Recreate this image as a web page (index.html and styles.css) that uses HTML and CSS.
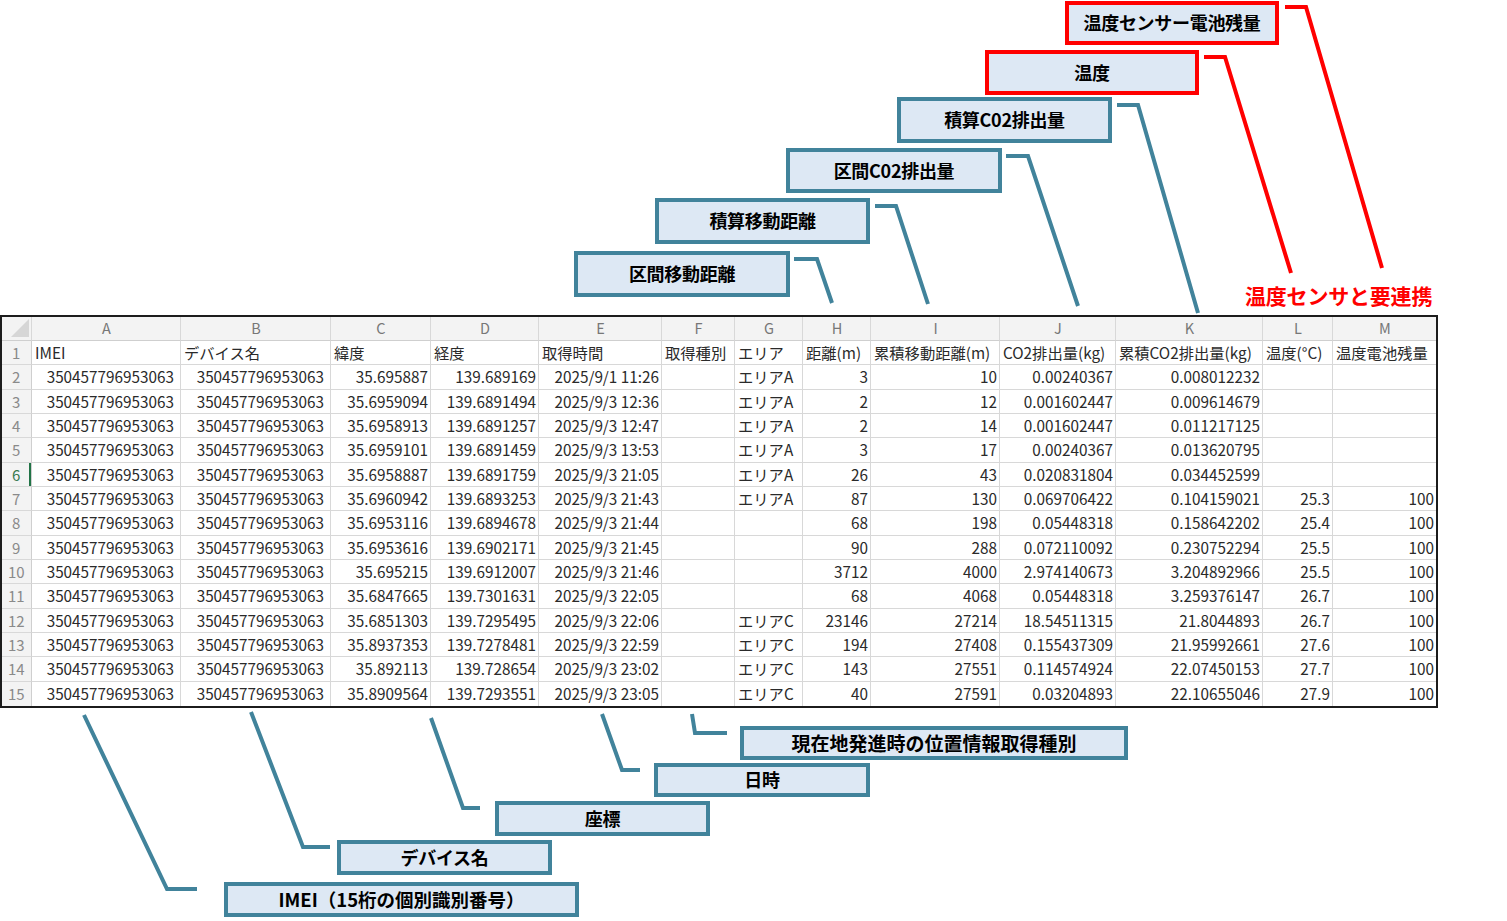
FILE: index.html
```html
<!DOCTYPE html>
<html lang="ja">
<head>
<meta charset="utf-8">
<title>データ項目説明</title>
<link rel="stylesheet" href="styles.css">
</head>
<body>
<div class="canvas">
  <div class="sheet">
    <table class="grid">
      <colgroup>
        <col style="width:30px"><col style="width:149px"><col style="width:150px"><col style="width:100px"><col style="width:108px"><col style="width:123px"><col style="width:73px"><col style="width:68px"><col style="width:68px"><col style="width:129px"><col style="width:116px"><col style="width:147px"><col style="width:70px"><col style="width:103px">
      </colgroup>
      <thead>
        <tr class="colhead">
          <th class="corner"><span class="tri"></span></th>
          <th>A</th><th>B</th><th>C</th><th>D</th><th>E</th><th>F</th><th>G</th><th>H</th><th>I</th><th>J</th><th>K</th><th>L</th><th>M</th>
        </tr>
      </thead>
      <tbody>
        <tr><th>1</th><td class="l">IMEI</td><td class="l">デバイス名</td><td class="l">緯度</td><td class="l">経度</td><td class="l">取得時間</td><td class="l">取得種別</td><td class="l">エリア</td><td class="l">距離(m)</td><td class="l">累積移動距離(m)</td><td class="l">CO2排出量(kg)</td><td class="l">累積CO2排出量(kg)</td><td class="l">温度(°C)</td><td class="l">温度電池残量</td></tr>
        <tr><th>2</th><td>350457796953063</td><td>350457796953063</td><td>35.695887</td><td>139.689169</td><td>2025/9/1 11:26</td><td></td><td class="l">エリアA</td><td>3</td><td>10</td><td>0.00240367</td><td>0.008012232</td><td></td><td></td></tr>
        <tr><th>3</th><td>350457796953063</td><td>350457796953063</td><td>35.6959094</td><td>139.6891494</td><td>2025/9/3 12:36</td><td></td><td class="l">エリアA</td><td>2</td><td>12</td><td>0.001602447</td><td>0.009614679</td><td></td><td></td></tr>
        <tr><th>4</th><td>350457796953063</td><td>350457796953063</td><td>35.6958913</td><td>139.6891257</td><td>2025/9/3 12:47</td><td></td><td class="l">エリアA</td><td>2</td><td>14</td><td>0.001602447</td><td>0.011217125</td><td></td><td></td></tr>
        <tr><th>5</th><td>350457796953063</td><td>350457796953063</td><td>35.6959101</td><td>139.6891459</td><td>2025/9/3 13:53</td><td></td><td class="l">エリアA</td><td>3</td><td>17</td><td>0.00240367</td><td>0.013620795</td><td></td><td></td></tr>
        <tr><th class="sel">6</th><td>350457796953063</td><td>350457796953063</td><td>35.6958887</td><td>139.6891759</td><td>2025/9/3 21:05</td><td></td><td class="l">エリアA</td><td>26</td><td>43</td><td>0.020831804</td><td>0.034452599</td><td></td><td></td></tr>
        <tr><th>7</th><td>350457796953063</td><td>350457796953063</td><td>35.6960942</td><td>139.6893253</td><td>2025/9/3 21:43</td><td></td><td class="l">エリアA</td><td>87</td><td>130</td><td>0.069706422</td><td>0.104159021</td><td>25.3</td><td>100</td></tr>
        <tr><th>8</th><td>350457796953063</td><td>350457796953063</td><td>35.6953116</td><td>139.6894678</td><td>2025/9/3 21:44</td><td></td><td></td><td>68</td><td>198</td><td>0.05448318</td><td>0.158642202</td><td>25.4</td><td>100</td></tr>
        <tr><th>9</th><td>350457796953063</td><td>350457796953063</td><td>35.6953616</td><td>139.6902171</td><td>2025/9/3 21:45</td><td></td><td></td><td>90</td><td>288</td><td>0.072110092</td><td>0.230752294</td><td>25.5</td><td>100</td></tr>
        <tr><th>10</th><td>350457796953063</td><td>350457796953063</td><td>35.695215</td><td>139.6912007</td><td>2025/9/3 21:46</td><td></td><td></td><td>3712</td><td>4000</td><td>2.974140673</td><td>3.204892966</td><td>25.5</td><td>100</td></tr>
        <tr><th>11</th><td>350457796953063</td><td>350457796953063</td><td>35.6847665</td><td>139.7301631</td><td>2025/9/3 22:05</td><td></td><td></td><td>68</td><td>4068</td><td>0.05448318</td><td>3.259376147</td><td>26.7</td><td>100</td></tr>
        <tr><th>12</th><td>350457796953063</td><td>350457796953063</td><td>35.6851303</td><td>139.7295495</td><td>2025/9/3 22:06</td><td></td><td class="l">エリアC</td><td>23146</td><td>27214</td><td>18.54511315</td><td>21.8044893</td><td>26.7</td><td>100</td></tr>
        <tr><th>13</th><td>350457796953063</td><td>350457796953063</td><td>35.8937353</td><td>139.7278481</td><td>2025/9/3 22:59</td><td></td><td class="l">エリアC</td><td>194</td><td>27408</td><td>0.155437309</td><td>21.95992661</td><td>27.6</td><td>100</td></tr>
        <tr><th>14</th><td>350457796953063</td><td>350457796953063</td><td>35.892113</td><td>139.728654</td><td>2025/9/3 23:02</td><td></td><td class="l">エリアC</td><td>143</td><td>27551</td><td>0.114574924</td><td>22.07450153</td><td>27.7</td><td>100</td></tr>
        <tr><th>15</th><td>350457796953063</td><td>350457796953063</td><td>35.8909564</td><td>139.7293551</td><td>2025/9/3 23:05</td><td></td><td class="l">エリアC</td><td>40</td><td>27591</td><td>0.03204893</td><td>22.10655046</td><td>27.9</td><td>100</td></tr>
      </tbody>
    </table>
  </div>

  <svg class="lines" width="1507" height="921" viewBox="0 0 1507 921">
    <g fill="none" stroke="#41839b" stroke-width="4" stroke-linejoin="miter">
      <polyline points="794,259 817,259 832,303"/>
      <polyline points="875,206 896,206 928,304"/>
      <polyline points="1006,156 1028,156 1078,306"/>
      <polyline points="1117,105 1138,105 1198,313"/>
      <polyline points="84,715 167,889 197,889"/>
      <polyline points="251,712 303,847 330,847"/>
      <polyline points="431,718 463,808 480,808"/>
      <polyline points="602,714 622,770 640,770"/>
      <polyline points="692,714 695,733 727,733"/>
    </g>
    <g fill="none" stroke="#ff0000" stroke-width="4" stroke-linejoin="miter">
      <polyline points="1204,57 1225,57 1291,273"/>
      <polyline points="1285,7 1306,7 1382,268"/>
    </g>
  </svg>

  <div class="call red c-batt">温度センサー電池残量</div>
  <div class="call red c-temp">温度</div>
  <div class="call c-co2sum">積算C02排出量</div>
  <div class="call c-co2">区間C02排出量</div>
  <div class="call c-distsum">積算移動距離</div>
  <div class="call c-dist">区間移動距離</div>
  <div class="note">温度センサと要連携</div>

  <div class="call c-kind">現在地発進時の位置情報取得種別</div>
  <div class="call c-time">日時</div>
  <div class="call c-coord">座標</div>
  <div class="call c-dev">デバイス名</div>
  <div class="call c-imei">IMEI（15桁の個別識別番号）</div>
</div>
</body>
</html>
```

FILE: styles.css
```css
* { box-sizing: border-box; }
html, body { margin: 0; padding: 0; background: #ffffff; }
body { font-family: "Noto Sans CJK JP", "Noto Sans", sans-serif; }

.canvas {
  position: relative;
  width: 1507px;
  height: 921px;
  overflow: hidden;
  padding-top: 315px;
}

.sheet {
  width: 1438px;
  border: 2px solid #1c1c1c;
  background: #ffffff;
}

.grid {
  border-collapse: separate;
  border-spacing: 0;
  table-layout: fixed;
  width: 1434px;
  font-size: 15.3px;
  color: #2a2a2a;
}

.grid th, .grid td {
  border-right: 1px solid #d8d8d8;
  border-bottom: 1px solid #d8d8d8;
  padding: 0 2px 0 3px;
  height: 24.33px;
  white-space: nowrap;
  overflow: hidden;
  vertical-align: middle;
  line-height: 1;
}
.grid tr > :last-child { border-right: none; }
.grid tbody tr:last-child > * { border-bottom: none; }

.grid td { text-align: right; }
.grid td.l { text-align: left; }
.grid tbody td:nth-child(2),
.grid tbody td:nth-child(3) { padding-right: 6px; }

.colhead th {
  height: 24px;
  background: #f3f3f3;
  color: #777777;
  font-weight: 400;
  text-align: center;
  font-size: 14.5px;
  border-bottom-color: #cfcfcf;
}

.grid tbody th {
  background: #f3f3f3;
  color: #8a8a8a;
  font-weight: 400;
  text-align: left;
  padding-left: 10px;
  font-size: 15px;
  border-right-color: #cfcfcf;
}
.grid tbody tr:nth-child(n+10) th { padding-left: 6px; }
.grid tbody th.sel {
  color: #3a7a50;
  box-shadow: inset -2px 0 0 #217346;
}

.corner { position: relative; }
.tri {
  position: absolute;
  right: 2px;
  bottom: 3px;
  width: 0;
  height: 0;
  border-left: 18px solid transparent;
  border-bottom: 18px solid #d6d6d6;
}

.lines {
  position: absolute;
  left: 0;
  top: 0;
  pointer-events: none;
}

.call {
  position: absolute;
  display: flex;
  align-items: center;
  justify-content: center;
  border: 4px solid #41839b;
  background: #dde8f4;
  color: #000000;
  font-weight: 700;
  font-size: 18px;
  letter-spacing: -0.3px;
  white-space: nowrap;
  padding-bottom: 2px;
}
.call.red { border-color: #ff0000; }

.c-batt    { left: 1065px; top: 1px;   width: 214px; height: 44px; }
.c-temp    { left: 985px;  top: 50px;  width: 214px; height: 45px; }
.c-co2sum  { left: 897px;  top: 97px;  width: 215px; height: 46px; }
.c-co2     { left: 786px;  top: 148px; width: 216px; height: 45px; }
.c-distsum { left: 655px;  top: 198px; width: 215px; height: 46px; }
.c-dist    { left: 574px;  top: 251px; width: 216px; height: 46px; }

.c-kind  { left: 740px; top: 726px; width: 388px; height: 34px; font-size: 19px; letter-spacing: 0; }
.c-time  { left: 654px; top: 763px; width: 216px; height: 34px; }
.c-coord { left: 495px; top: 801px; width: 215px; height: 35px; }
.c-dev   { left: 337px; top: 840px; width: 215px; height: 35px; }
.c-imei  { left: 224px; top: 882px; width: 355px; height: 35px; font-size: 18.5px; letter-spacing: 0; }

.note {
  position: absolute;
  left: 1245px;
  top: 280px;
  color: #ff0000;
  font-weight: 700;
  font-size: 21px;
  letter-spacing: -0.2px;
  white-space: nowrap;
}
```
